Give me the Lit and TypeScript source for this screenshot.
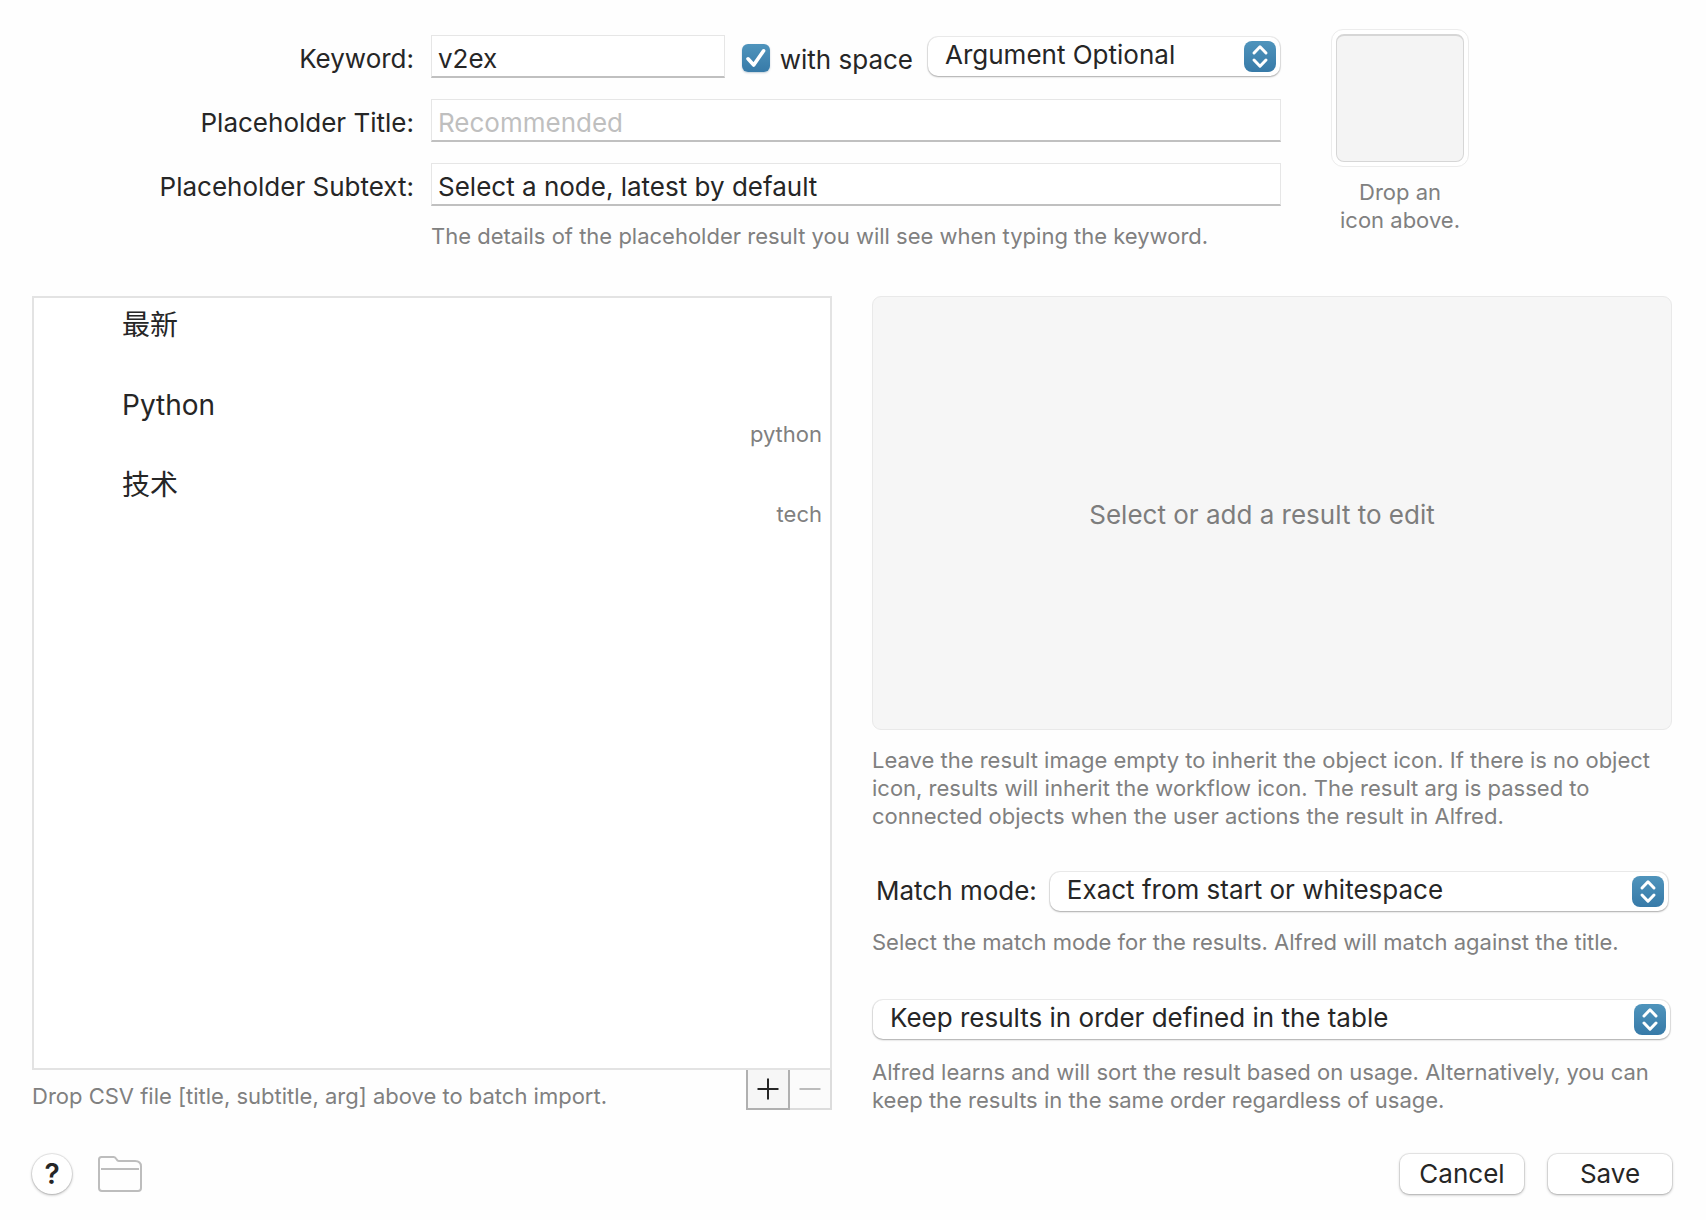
import { LitElement, html, css, svg } from "lit";
import { customElement, property, state } from "lit/decorators.js";

interface ResultRow {
  title: string;
  arg: string;
}

@customElement("popup-select")
export class PopupSelect extends LitElement {
  @property() label = "";
  @property({ attribute: false }) options: string[] = [];

  static styles = css`
    :host {
      display: block;
      position: relative;
      min-width: 0;
    }
    .select {
      display: block;
      box-sizing: border-box;
      width: 100%;
      height: 39px;
      margin: 0;
      padding: 0 48px 3px 17px;
      appearance: none;
      border: 0;
      border-radius: 10px;
      background: #ffffff;
      box-shadow: 0 0 0 1px rgba(0, 0, 0, 0.07), 0 1px 2px rgba(0, 0, 0, 0.28);
      color: #262626;
      font: 26px/36px Inter, "Liberation Sans", sans-serif;
    }
    .badge {
      position: absolute;
      top: 4px;
      right: 4px;
      width: 32px;
      height: 32px;
      pointer-events: none;
    }
  `;

  render() {
    return html`
      <select class="select" aria-label=${this.label}>
        ${this.options.map((option) => html`<option>${option}</option>`)}
      </select>
      <svg class="badge" viewBox="0 0 32 32" aria-hidden="true">
        <defs>
          <linearGradient id="blue" x1="0" y1="0" x2="0" y2="1">
            <stop offset="0" stop-color="#4f94bc"></stop>
            <stop offset="1" stop-color="#377aa8"></stop>
          </linearGradient>
        </defs>
        <rect x="0" y="0" width="32" height="31" rx="8" fill="url(#blue)"></rect>
        <path
          d="M10 12 16 5.800 22 12M10 19 16 25.200 22 19"
          fill="none"
          stroke="#ffffff"
          stroke-width="3"
          stroke-linecap="round"
          stroke-linejoin="round"
        ></path>
      </svg>
    `;
  }
}

@customElement("app-root")
export class AppRoot extends LitElement {
  @state() private rows: ResultRow[] = [
    { title: "最新", arg: "" },
    { title: "Python", arg: "python" },
    { title: "技术", arg: "tech" },
  ];

  static styles = css`
    :host {
      display: block;
      min-height: 100vh;
      background: #fefefe;
      color: #262626;
      font-family: Inter, "Liberation Sans", "Noto Sans CJK SC", sans-serif;
      font-size: 26px;
      line-height: 32px;
    }
    * {
      box-sizing: border-box;
    }
    .sheet {
      display: flex;
      flex-direction: column;
      min-height: 100vh;
      padding: 29px 34px 26px 32px;
    }
    .top {
      display: grid;
      grid-template-columns: 382fr 850fr 138px 219fr;
      column-gap: 17px;
      height: 267px;
    }
    .fields {
      display: grid;
      grid-column: 1 / 3;
      grid-template-columns: subgrid;
      grid-auto-rows: 43px;
      row-gap: 21px;
      padding-top: 6px;
    }
    .label {
      align-self: center;
      padding-top: 5px;
      text-align: right;
      white-space: nowrap;
    }
    .text {
      width: 100%;
      height: 43px;
      margin: 0;
      padding: 5px 6px 0;
      border: 1px solid #e6e6e6;
      border-bottom: 2px solid #c0c0c0;
      border-radius: 0;
      background: #ffffff;
      color: #262626;
      font: inherit;
      outline: 0;
    }
    .text::placeholder {
      color: #bfbfbf;
      opacity: 1;
    }
    .keyword-row {
      display: flex;
      align-items: center;
    }
    .keyword {
      flex: 1 1 294px;
      width: 0;
      margin-right: 17px;
    }
    .check {
      display: flex;
      align-items: center;
      gap: 10px;
      padding-top: 2px;
      white-space: nowrap;
    }
    .check-box {
      position: relative;
      width: 28px;
      height: 28px;
    }
    .check-box input {
      display: block;
      width: 28px;
      height: 28px;
      margin: 0;
      appearance: none;
      border-radius: 6px;
      background: linear-gradient(#4f94bc, #377aa8);
      box-shadow: 0 1px 2px rgba(0, 60, 100, 0.25);
    }
    .check-box svg {
      position: absolute;
      inset: 0;
      pointer-events: none;
    }
    .check-text {
      padding-top: 4px;
    }
    .argument {
      flex: 0 0 352px;
      margin: 0 1px 0 15px;
    }
    .hint {
      margin: 0;
      color: #808080;
      font-size: 22px;
      line-height: 28px;
    }
    .fields .hint {
      grid-column: 2;
      margin-top: -5px;
    }
    .well-column {
      grid-column: 3;
      display: flex;
      flex-direction: column;
      gap: 11px;
      margin: 0 -33px 0 33px;
      text-align: center;
    }
    .well {
      height: 138px;
      padding: 4px;
      border: 1px solid #ececec;
      border-radius: 12px;
      background: #ffffff;
    }
    .well-inner {
      height: 100%;
      border: 1px solid #d6d6d6;
      border-width: 2px 1px 1px;
      border-radius: 8px;
      background: #f4f4f4;
    }
    .main {
      display: grid;
      grid-template-columns: 1fr 1fr;
      column-gap: 40px;
      flex: 1 1 auto;
    }
    .left,
    .right {
      display: flex;
      flex-direction: column;
      min-width: 0;
    }
    .left {
      padding-bottom: 4px;
    }
    .results {
      flex: 1 1 auto;
      margin: 0;
      padding: 7px 8px 0 88px;
      border: 2px solid #e3e3e3;
      background: #ffffff;
      list-style: none;
    }
    .result {
      display: flex;
      flex-direction: column;
      height: 80px;
    }
    .title {
      font-size: 28px;
      line-height: 40px;
    }
    .arg {
      text-align: right;
      line-height: 18px;
    }
    .list-foot {
      display: flex;
      justify-content: space-between;
      height: 40px;
    }
    .list-foot .hint {
      padding-top: 12px;
    }
    .steppers {
      display: flex;
    }
    .stepper {
      display: grid;
      place-items: center;
      width: 44px;
      height: 40px;
      margin: 0;
      padding: 0;
      border: 2px solid #b0b0b0;
      border-top: 0;
      background: #f6f6f6;
      color: #262626;
    }
    .stepper:disabled {
      width: 42px;
      border-color: #dcdcdc;
      border-left: 0;
      background: #fbfbfb;
      color: #bcbcbc;
    }
    .editor {
      display: grid;
      place-items: center;
      flex: 1 1 auto;
      min-height: 434px;
      padding-right: 20px;
      padding-top: 4px;
      border: 1px solid #e9e9e9;
      border-radius: 9px;
      background: #f6f6f6;
      color: #7d7d7d;
    }
    .image-hint {
      margin-top: 16px;
    }
    .match {
      display: flex;
      align-items: center;
      gap: 13px;
      height: 40px;
      margin: 41px 4px 17px;
      white-space: nowrap;
    }
    .match popup-select {
      flex: 1 1 auto;
    }
    .order {
      margin: 44px 2px 19px 1px;
    }
    .footer {
      display: flex;
      align-items: center;
      margin-top: 40px;
    }
    .help,
    .button {
      height: 40px;
      margin: 0;
      padding: 0;
      border: 0;
      background: #ffffff;
      box-shadow: 0 0 0 1px rgba(0, 0, 0, 0.07), 0 1px 3px rgba(0, 0, 0, 0.3);
      color: #262626;
      font: inherit;
    }
    .help {
      width: 40px;
      border-radius: 20px;
      font-size: 28px;
      font-weight: 600;
    }
    .folder {
      display: block;
      margin: 0 auto 0 25px;
      padding: 0;
      border: 0;
      background: none;
      color: #bdbdbd;
    }
    .folder svg {
      display: block;
    }
    .button {
      width: 124px;
      border-radius: 9px;
      margin-left: 24px;
    }
  `;

  private renderGlyph(kind: "plus" | "minus") {
    return html`<svg width="22" height="22" viewBox="0 0 22 22" fill="none" stroke="currentColor" stroke-width="2">
      ${kind === "plus" ? svg`<path d="M.5 11h21M11 .5v21"></path>` : svg`<path d="M.5 11h21"></path>`}
    </svg>`;
  }

  render() {
    return html`
      <main class="sheet">
        <section class="top">
          <div class="fields">
            <label class="label" for="keyword">Keyword:</label>
            <div class="keyword-row">
              <input class="text keyword" id="keyword" type="text" .value=${"v2ex"} />
              <label class="check">
                <span class="check-box">
                  <input type="checkbox" checked />
                  <svg width="28" height="28" viewBox="0 0 28 28" aria-hidden="true">
                    <path d="M6 14.8 11.7 21 21.6 6.8" fill="none" stroke="#ffffff" stroke-width="3.6" stroke-linecap="round" stroke-linejoin="round"></path>
                  </svg>
                </span>
                <span class="check-text">with space</span>
              </label>
              <popup-select
                class="argument"
                label="Argument"
                .options=${["Argument Optional", "Argument Required", "No Argument"]}
              ></popup-select>
            </div>
            <label class="label" for="title">Placeholder Title:</label>
            <input class="text" id="title" type="text" placeholder="Recommended" />
            <label class="label" for="subtext">Placeholder Subtext:</label>
            <input class="text" id="subtext" type="text" .value=${"Select a node, latest by default"} />
            <p class="hint">The details of the placeholder result you will see when typing the keyword.</p>
          </div>
          <div class="well-column">
            <div class="well"><div class="well-inner"></div></div>
            <p class="hint">Drop an<br />icon above.</p>
          </div>
        </section>

        <section class="main">
          <div class="left">
            <ul class="results">
              ${this.rows.map(
                (row) => html`<li class="result">
                  <span class="title">${row.title}</span>
                  <span class="hint arg">${row.arg}</span>
                </li>`
              )}
            </ul>
            <div class="list-foot">
              <p class="hint">Drop CSV file [title, subtitle, arg] above to batch import.</p>
              <div class="steppers">
                <button class="stepper" type="button" aria-label="Add result">${this.renderGlyph("plus")}</button>
                <button class="stepper" type="button" aria-label="Remove result" disabled>${this.renderGlyph("minus")}</button>
              </div>
            </div>
          </div>

          <div class="right">
            <div class="editor">Select or add a result to edit</div>
            <p class="hint image-hint">
              Leave the result image empty to inherit the object icon. If there is no object icon, results will
              inherit the workflow icon. The result arg is passed to connected objects when the user actions the
              result in Alfred.
            </p>
            <div class="match">
              <span>Match mode:</span>
              <popup-select
                label="Match mode"
                .options=${["Exact from start or whitespace", "Exact from start", "Any"]}
              ></popup-select>
            </div>
            <p class="hint">Select the match mode for the results. Alfred will match against the title.</p>
            <popup-select
              class="order"
              label="Result order"
              .options=${["Keep results in order defined in the table", "Sort results by usage"]}
            ></popup-select>
            <p class="hint">
              Alfred learns and will sort the result based on usage. Alternatively, you can keep the results in the
              same order regardless of usage.
            </p>
          </div>
        </section>

        <footer class="footer">
          <button class="help" type="button" aria-label="Help">?</button>
          <button class="folder" type="button" aria-label="Open folder">
            <svg width="46" height="38" viewBox="0 0 46 38" fill="none" stroke="currentColor" stroke-width="2">
              <path d="M2 33V4.500Q2 2 4.500 2H16.500Q18 2 19 3.500L20.500 5.500Q21 6 22 6H38Q44 6 44 11.500V33Q44 36 41 36H5Q2 36 2 33Z"></path>
              <path d="M4 14H42"></path>
            </svg>
          </button>
          <button class="button" type="button">Cancel</button>
          <button class="button" type="button">Save</button>
        </footer>
      </main>
    `;
  }
}
